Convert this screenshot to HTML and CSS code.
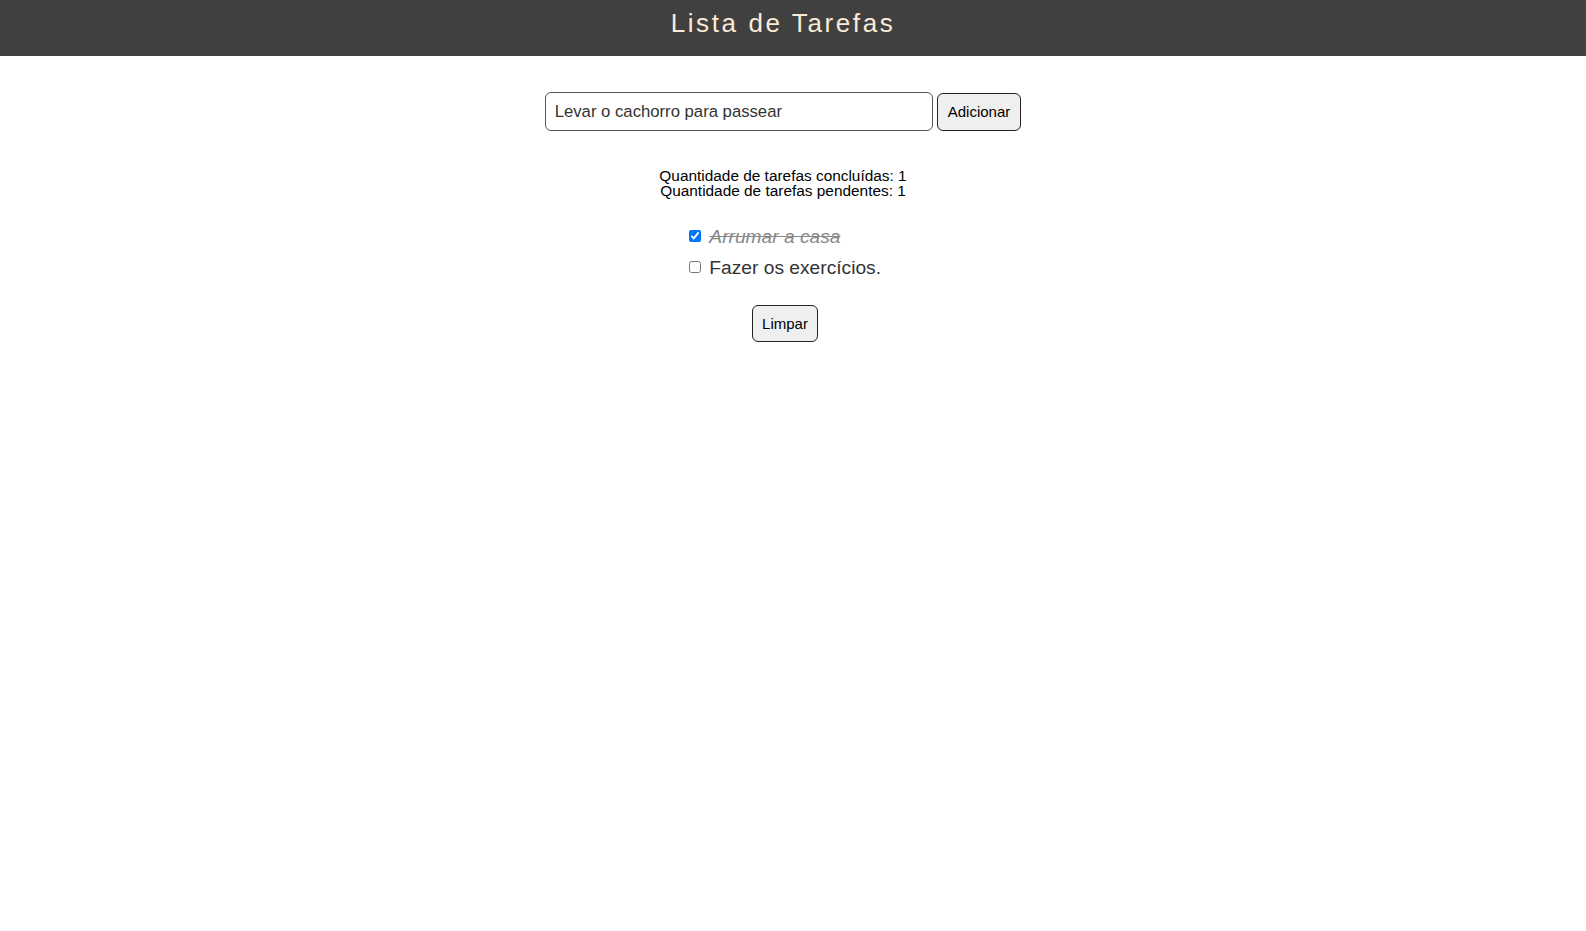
FILE: index.html
```html
<!DOCTYPE html>
<html lang="pt-BR">
<head>
<meta charset="utf-8">
<title>Lista de Tarefas</title>
<link rel="stylesheet" href="styles.css">
</head>
<body>
  <header class="topbar">
    <h1 class="title">Lista de Tarefas</h1>
  </header>
  <main class="content">
    <form class="add-form">
      <input class="task-input" type="text" value="Levar o cachorro para passear">
      <button class="btn btn-add" type="button">Adicionar</button>
    </form>
    <div class="stats">
      <div>Quantidade de tarefas concluídas: 1</div>
      <div>Quantidade de tarefas pendentes: 1</div>
    </div>
    <ul class="tasks">
      <li class="task done"><input class="check" type="checkbox" checked> <span class="task-text">Arrumar a casa</span></li>
      <li class="task"><input class="check" type="checkbox"> <span class="task-text">Fazer os exercícios.</span></li>
    </ul>
    <div class="actions">
      <button class="btn btn-clear" type="button">Limpar</button>
    </div>
  </main>
</body>
</html>
```

FILE: styles.css
```css
* {
  box-sizing: border-box;
}

html, body {
  margin: 0;
  padding: 0;
  background: #ffffff;
  font-family: "Liberation Sans", Arial, sans-serif;
  color: #000;
}

.topbar {
  height: 56px;
  background: #404040;
  padding: 8px 20px 0 0;
  text-align: center;
}

.title {
  margin: 0;
  font-size: 26px;
  line-height: 30px;
  font-weight: 400;
  letter-spacing: 2.6px;
  color: #faebd7;
}

.content {
  padding: 36px 20px 0 0;
  display: flex;
  flex-direction: column;
  align-items: center;
}

.add-form {
  display: flex;
  align-items: center;
  gap: 4px;
  margin: 0;
}

.task-input {
  width: 388px;
  height: 39px;
  padding: 0 9px;
  font-family: "Liberation Sans", Arial, sans-serif;
  font-size: 16.7px;
  color: #333;
  border: 1px solid #555;
  border-radius: 6px;
  background: #fff;
  outline: none;
}

.btn {
  font-family: "Liberation Sans", Arial, sans-serif;
  font-size: 15px;
  color: #000;
  background: #efefef;
  border: 1px solid #222;
  border-radius: 6px;
  line-height: 17px;
  cursor: pointer;
}

.btn-add {
  height: 38px;
  padding: 0 10px;
}

.btn-clear {
  height: 37px;
  padding: 0 9px;
}

.stats {
  margin-top: 37px;
  font-size: 15.4px;
  line-height: 15px;
  text-align: center;
  color: #000;
}

.tasks {
  list-style: none;
  margin: 23px 0 0 0;
  padding: 0;
  text-align: left;
}

.task {
  height: 31px;
  line-height: 31px;
  font-size: 19.2px;
  color: #333;
}

.check {
  width: 12px;
  height: 12px;
  vertical-align: middle;
  margin: 0 3px 3px 4px;
}

.done .task-text {
  font-style: italic;
  text-decoration: line-through;
  color: #888;
}

.actions {
  margin-top: 22px;
  padding-left: 4px;
}
```
